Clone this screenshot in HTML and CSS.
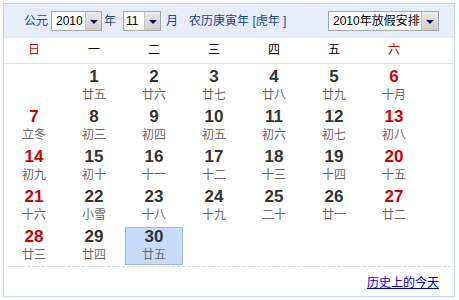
FILE: index.html
```html
<!DOCTYPE html>
<html lang="zh-CN">
<head>
    <meta charset="UTF-8">
    <title>万年历</title>
    <link rel="stylesheet" href="styles.css">
</head>
<body>
    <div class="calendar">
        <div class="cal-head">
            <span class="label">公元</span>
            <span class="select sel-year"><span class="sel-text">2010</span><span class="sel-btn"></span></span>
            <span class="label gap-year">年</span>
            <span class="select sel-month"><span class="sel-text">11</span><span class="sel-btn"></span></span>
            <span class="label gap-month">月</span>
            <span class="label lunar-year">农历庚寅年 [虎年 ]</span>
            <span class="select sel-holiday"><span class="sel-text">2010年放假安排</span><span class="sel-btn"></span></span>
        </div>

        <div class="week">
            <span class="weekend">日</span>
            <span>一</span>
            <span>二</span>
            <span>三</span>
            <span>四</span>
            <span>五</span>
            <span class="weekend">六</span>
        </div>

        <div class="days">
            <div class="day empty"></div>
            <div class="day"><b>1</b><small>廿五</small></div>
            <div class="day"><b>2</b><small>廿六</small></div>
            <div class="day"><b>3</b><small>廿七</small></div>
            <div class="day"><b>4</b><small>廿八</small></div>
            <div class="day"><b>5</b><small>廿九</small></div>
            <div class="day weekend"><b>6</b><small>十月</small></div>

            <div class="day weekend"><b>7</b><small>立冬</small></div>
            <div class="day"><b>8</b><small>初三</small></div>
            <div class="day"><b>9</b><small>初四</small></div>
            <div class="day"><b>10</b><small>初五</small></div>
            <div class="day"><b>11</b><small>初六</small></div>
            <div class="day"><b>12</b><small>初七</small></div>
            <div class="day weekend"><b>13</b><small>初八</small></div>

            <div class="day weekend"><b>14</b><small>初九</small></div>
            <div class="day"><b>15</b><small>初十</small></div>
            <div class="day"><b>16</b><small>十一</small></div>
            <div class="day"><b>17</b><small>十二</small></div>
            <div class="day"><b>18</b><small>十三</small></div>
            <div class="day"><b>19</b><small>十四</small></div>
            <div class="day weekend"><b>20</b><small>十五</small></div>

            <div class="day weekend"><b>21</b><small>十六</small></div>
            <div class="day"><b>22</b><small>小雪</small></div>
            <div class="day"><b>23</b><small>十八</small></div>
            <div class="day"><b>24</b><small>十九</small></div>
            <div class="day"><b>25</b><small>二十</small></div>
            <div class="day"><b>26</b><small>廿一</small></div>
            <div class="day weekend"><b>27</b><small>廿二</small></div>

            <div class="day weekend"><b>28</b><small>廿三</small></div>
            <div class="day"><b>29</b><small>廿四</small></div>
            <div class="day today"><b>30</b><small>廿五</small></div>
        </div>

        <div class="cal-foot">
            <a href="#">历史上的今天</a>
        </div>
    </div>
</body>
</html>
```

FILE: styles.css
```css
* {
    margin: 0;
    padding: 0;
    box-sizing: border-box;
}

body {
    font-family: 'Liberation Sans', Arial, 'Noto Sans CJK SC', sans-serif;
    font-size: 12px;
    background: #fff;
    padding: 3px;
}

.calendar {
    width: 452px;
    height: 294px;
    border: 1px solid #c2d6f6;
}

/* 顶部工具栏 */
.cal-head {
    height: 34px;
    background: #e6edf8;
    display: flex;
    align-items: center;
    padding: 0 15px 0 20px;
    color: #1c4690;
}

.label {
    line-height: 20px;
}

.gap-year {
    margin: 0 4px 0 2px;
}

.gap-month {
    margin: 0 11px 0 5px;
}

.select {
    display: inline-flex;
    height: 20px;
    border: 1px solid #a7a7a7;
    background: #fff;
    color: #000;
    margin-left: 3px;
}

.sel-text {
    flex: 1;
    line-height: 18px;
    padding-left: 4px;
    white-space: nowrap;
}

.sel-btn {
    width: 16px;
    background: linear-gradient(#ececec, #cbcbcb);
    border-left: 1px solid #c4c4c4;
    display: flex;
    align-items: center;
    justify-content: center;
}

.sel-btn::after {
    content: "";
    border-top: 4px solid #14145c;
    border-left: 4px solid transparent;
    border-right: 4px solid transparent;
    margin-top: 2px;
}

.sel-year {
    width: 51px;
}

.sel-month {
    width: 38px;
}

.sel-month .sel-text {
    padding-left: 2px;
}

.sel-holiday {
    width: 111px;
    margin-left: auto;
}

.sel-holiday .sel-btn {
    width: 17px;
}

/* 星期 */
.week {
    display: grid;
    grid-template-columns: repeat(7, 60px);
    height: 26px;
    border-bottom: 1px solid #d6dfec;
}

.week span {
    text-align: center;
    line-height: 25px;
    color: #000;
}

.week .weekend {
    color: #c00;
}

/* 日期 */
.days {
    display: grid;
    grid-template-columns: repeat(7, 60px);
    grid-auto-rows: 40px;
    margin-top: 2px;
    height: 200px;
}

.day {
    margin: 1px;
    border: 1px solid transparent;
    display: flex;
    flex-direction: column;
    align-items: center;
}

.day b {
    font-size: 17px;
    line-height: 17px;
    color: #333;
}

.day small {
    font-size: 12px;
    line-height: 17px;
    margin-top: 2px;
    color: #666;
}

.day.weekend b {
    color: #c00;
}

.day.today {
    background: #c5dcfe;
    border-color: #a0b9df;
}

/* 底部 */
.cal-foot {
    margin: 0 3px;
    height: 30px;
    border-top: 1px dashed #d9d9d9;
    text-align: right;
    padding: 9px 12px 0 0;
}

.cal-foot a {
    color: #0000cc;
    line-height: 14px;
}
```
